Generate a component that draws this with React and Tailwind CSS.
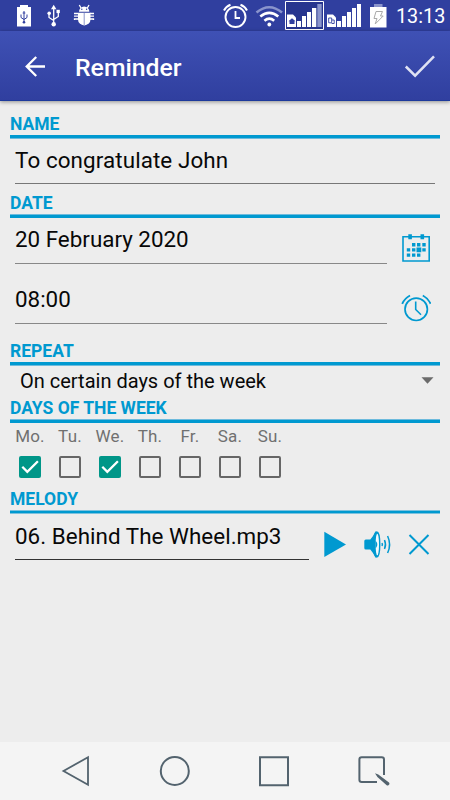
import { useState } from 'react';

const DAYS = ['Mo.', 'Tu.', 'We.', 'Th.', 'Fr.', 'Sa.', 'Su.'];

const EDGES = {
  top:    'border-t border-[#6dbbdd]',
  bottom: 'border-b border-[#6dbbdd]',
  both:   'border-y border-[#7cc2de]',
};

function StatusBar() {
  return (
    <div className="h-[31px] shrink-0 flex items-center bg-[#303f9f] text-white">
      {/* Battery with usb */}
      <svg className="ml-[16px] w-[16px] h-[24px]" viewBox="16 4 16 24">
        <path d="M20 5h8v2h3v19.500H17V7h3z" fill="#fff" />
        <path d="M24 11v12M21 14.500v3l3 2 3-2v-3M22.700 13h2.600" fill="none" stroke="#303f9f" strokeWidth="1" />
        <circle cx="24" cy="22.300" r="1.300" fill="#303f9f" />
      </svg>
      {/* Usb */}
      <svg className="ml-[14px] w-[16px] h-[24px]" viewBox="46 4 16 24">
        <path d="M53.700 8v16M49 14v3.500l4.700 3M58.300 12v4.500l-4.600 3" fill="none" stroke="#fff" strokeWidth="1.300" />
        <path d="M53.700 4.800l2.700 4.400h-5.400z" fill="#fff" />
        <circle cx="53.700" cy="24.300" r="2.200" fill="#fff" />
        <circle cx="49.200" cy="13.300" r="1.800" fill="#fff" />
        <path d="M56.500 9.800h3.300v3.300h-3.300z" fill="#fff" />
      </svg>
      {/* Debug bug */}
      <svg className="ml-[11px] w-[22px] h-[24px]" viewBox="73 4 22 24">
        <path d="M79 11.700a5.200 5.200 0 0 1 10.400 0z" fill="#fff" />
        <path d="M79.300 5l1.700 3M89 5l-1.700 3M74 13.500h4M74 16.200h4M74.500 20v-1h4M90 13.500h4M90 16.200h4M93.500 20v-1h-4" fill="none" stroke="#fff" strokeWidth="1.300" />
        <path d="M78 12.700h12.500v6.500a6.200 6.200 0 0 1-12.500 0z" fill="#fff" />
        <path d="M84.200 13v12" stroke="#8c95ca" strokeWidth="1" />
        <circle cx="81.800" cy="9.300" r=".7" fill="#303f9f" />
        <circle cx="86.600" cy="9.300" r=".7" fill="#303f9f" />
      </svg>
      <div className="grow" />
      {/* Alarm */}
      <svg className="w-[26px] h-[26px]" viewBox="223 3 26 26" fill="none" stroke="#fff">
        <circle cx="235.500" cy="17" r="10" strokeWidth="1.900" />
        <path d="M235.500 11v7h4.500" strokeWidth="1.800" />
        <path d="M224 10.500q2-4 6.500-5.700M247 10.500q-2-4-6.500-5.700" strokeWidth="2" />
      </svg>
      {/* Wifi */}
      <svg className="ml-[6px] w-[28px] h-[24px]" viewBox="255 5 28 24" fill="none" stroke="#fff" strokeWidth="2.600">
        <path d="M256.500 13.500q12.700-10.500 25.500 0" stroke="#8a94cc" />
        <path d="M260.300 17.600q9-7.600 18 0M264.400 21.700q4.900-4.200 9.800 0" />
        <circle cx="269.300" cy="25.500" r="1.900" fill="#fff" stroke="none" />
      </svg>
      {/* Sim 1, selected */}
      <svg className="ml-[2px] w-[39px] h-[31px]" viewBox="285 0 39 31">
        <path d="M285.500 1.500h38v28h-38z" fill="#27358f" stroke="#fff" />
        <path d="M287 14.500h6l3 3v9.500h-9z" fill="#fff" />
        <path d="M288.500 21.200l3.500-3 3.500 3h-1v2.800h-5v-2.800z" fill="#303f9f" />
        <path d="M297 21h4v6h-4zM302 16h4v11h-4zM307 12h4v15h-4zM312 8h4.300v19H312z" fill="#fff" />
        <path d="M317.300 4h4.400v23h-4.400z" fill="#8a94cc" />
      </svg>
      {/* Sim 2 */}
      <svg className="ml-[3px] w-[36px] h-[31px]" viewBox="327 0 36 31">
        <path d="M327 14.500h6l3 3v9.500h-9z" fill="#fff" />
        <path d="M328.700 18h3v4.800h-3zM331.700 20h2.500v3.500h-2.500" fill="none" stroke="#303f9f" strokeWidth=".9" />
        <path d="M337 21h4v6h-4zM342 16h4v11h-4zM347 12h4v15h-4zM352 8h4v19h-4zM357 4h4v23h-4z" fill="#fff" />
      </svg>
      {/* Charging battery */}
      <svg className="ml-[6px] w-[19px] h-[27px]" viewBox="369 2 19 27">
        <path d="M374 4h8.500v3H374z" fill="#8a94cc" />
        <path d="M370 7h16.500v20.500H370z" fill="#fff" />
        <path d="M376 11.500h6.500l-2 4.500h2.700l-8 8 1.800-5.500h-3z" fill="none" stroke="#aaa" />
      </svg>
      <span className="ml-[8px] mt-[2px] w-[54px] text-[19.8px] leading-[29px]">13:13</span>
    </div>
  );
}

function Toolbar() {
  return (
    <header className="relative h-[70px] shrink-0 flex items-center pb-[1px] border-b border-[#1d3a9c] bg-linear-to-b from-[#3f51b5] to-[#303f9f] shadow-[0_1px_4px_rgba(0,0,0,0.4)]">
      <svg className="ml-[24px] mt-[2px] w-[22px] h-[22px]" viewBox="24 55 22 22" fill="none" stroke="#fff" strokeWidth="2.300">
        <path d="M45 66.500H27M36.200 57l-9.500 9.500 9.500 9.500" />
      </svg>
      <h1 className="ml-[29px] mt-[5px] grow text-[24.8px] leading-[30px] font-medium text-white">Reminder</h1>
      <svg className="mr-[14px] mt-[2px] w-[32px] h-[24px]" viewBox="404 54 32 24" fill="none" stroke="#dfe2f3" strokeWidth="2.500">
        <path d="M405.800 66.500l9.300 9.200L434 56.300" />
      </svg>
    </header>
  );
}

function Heading({ children, edge }) {
  return (
    <div>
      <h2 className="h-[22px] text-[17.5px] leading-[23px] font-bold text-[#0099d0]">{children}</h2>
      <div className={`h-[4px] bg-[#0099d0] ${EDGES[edge]}`} />
    </div>
  );
}

function Field({ value, className }) {
  return (
    <div className={`ml-[5px] border-b text-[22.4px] leading-[28px] text-[#080808] whitespace-nowrap ${className}`}>{value}</div>
  );
}

function Checkbox({ checked, onChange }) {
  return (
    <button
      onClick={onChange}
      className={`size-[22px] rounded-[2px] ${checked ? 'bg-[#009688]' : 'border-2 border-[#666]'}`}
    >
      {checked && (
        <svg className="size-[22px]" viewBox="0 0 22 22" fill="none" stroke="#fff" strokeWidth="2.300">
          <path d="M3.300 10.800l5 5L18.900 5.300" />
        </svg>
      )}
    </button>
  );
}

function NavBar() {
  return (
    <nav className="h-[58px] shrink-0 flex items-center justify-between pl-[61px] pr-[60px] bg-[#f4f4f4]">
      <svg className="w-[30px] h-[32px]" viewBox="61 755 30 32" fill="none" stroke="#53636e" strokeWidth="1.800">
        <path d="M88 757.200v27.600L63.500 771z" />
      </svg>
      <svg className="w-[32px] h-[32px]" viewBox="0 0 32 32" fill="none" stroke="#53636e" strokeWidth="2">
        <circle cx="15.800" cy="16" r="14" />
      </svg>
      <svg className="w-[32px] h-[32px]" viewBox="258 755 32 32" fill="none" stroke="#53636e" strokeWidth="2">
        <path d="M260 757.200h28v28H260z" />
      </svg>
      <svg className="w-[32px] h-[32px]" viewBox="358 755 32 32" fill="none" stroke="#53636e" strokeWidth="2">
        <path d="M384 775v-15.500q0-2.300-2.300-2.300h-20q-2.300 0-2.300 2.300v20.300q0 2.300 2.300 2.300H377" />
        <path d="M375 773.200l3.300 1.300 10.700 8q1.200 1.800-.6 2.800-1 .6-2-.4l-9-8z" fill="#53636e" stroke="none" />
      </svg>
    </nav>
  );
}

export default function App() {
  const [days, setDays] = useState([true, false, true, false, false, false, false]);

  const toggle = (i) => setDays(d => d.map((v, j) => (j === i ? !v : v)));

  return (
    <div className="w-[450px] h-[800px] flex flex-col overflow-hidden bg-[#ededed] font-['Roboto',sans-serif]">
      <StatusBar />
      <Toolbar />

      <main className="grow px-[10px] pt-[12px]">
        <Heading edge="bottom">NAME</Heading>
        <div className="h-[53px] pt-[7px] pr-[5px]">
          <Field value="To congratulate John" className="h-[38px] border-[#777] tracking-[0.1px]" />
        </div>

        <Heading edge="top">DATE</Heading>
        <div className="h-[60px] pt-[7px] flex">
          <Field value="20 February 2020" className="w-[372px] h-[39px] border-[#888]" />
          <svg className="ml-[14px] mt-[8px] w-[30px] h-[30px]" viewBox="401 233 30 30">
            <path d="M403 236.800h26.200v24.200H403z" fill="none" stroke="#0099d0" strokeWidth="1.600" />
            <path d="M408.300 234.200h3.600v5h-3.600zM420.500 234.200h3.600v5h-3.600z" fill="#0099d0" />
            <path d="M412 243h3.400v3.400h-3.400zM417 243h3.400v3.400h-3.400zM422.300 243h3.400v3.400h-3.400zM406.800 248.200h3.400v3.400h-3.400zM412 248.200h3.400v3.400h-3.400zM416.500 247.500h4.800v4.800h-4.800zM422.300 248.200h3.400v3.400h-3.400zM406.800 253.400h3.400v3.400h-3.400zM412 253.400h3.400v3.400h-3.400zM417 253.400h3.400v3.400h-3.400z" fill="#0099d0" />
          </svg>
        </div>
        <div className="h-[62px] pt-[7px] flex">
          <Field value="08:00" className="w-[372px] h-[39px] border-[#888]" />
          <svg className="ml-[14px] mt-[8px] w-[30px] h-[30px]" viewBox="401 293 30 30" fill="none" stroke="#0099d0">
            <circle cx="416.200" cy="309.300" r="11.200" strokeWidth="1.700" />
            <path d="M415.700 301.500v8l5.300 5.300" strokeWidth="1.600" />
            <path d="M402.200 303.800q2.500-5.500 7.800-8.300M430.600 303.800q-2.500-5.500-7.800-8.300" strokeWidth="1.900" />
          </svg>
        </div>

        <Heading edge="bottom">REPEAT</Heading>
        <button className="w-full h-[31px] pl-[10px] pr-[6px] flex items-center justify-between text-[20px] leading-[31px] text-[#080808]">
          On certain days of the week
          <svg className="w-[13px] h-[7px] mb-[2px]" viewBox="0 0 13 7">
            <path d="M.500.300h12L6.500 6.800z" fill="#6b6b6b" />
          </svg>
        </button>

        <Heading edge="top">DAYS OF THE WEEK</Heading>
        <div className="h-[65px] flex">
          {DAYS.map((day, i) => (
            <div key={day} className="w-[40px] flex flex-col items-center">
              <span className="h-[33px] pt-[2px] text-[17px] leading-[22px] tracking-[0.2px] text-[#707070]">{day}</span>
              <Checkbox checked={days[i]} onChange={() => toggle(i)} />
            </div>
          ))}
        </div>

        <Heading edge="both">MELODY</Heading>
        <div className="h-[54px] pt-[8px] flex">
          <Field value="06. Behind The Wheel.mp3" className="w-[294px] h-[38px] border-[#333] tracking-[0.04px]" />
          <svg className="ml-[14px] mt-[8px] w-[24px] h-[28px]" viewBox="323 530 24 28">
            <path d="M324.300 531.700v25.300L346 544.500z" fill="#0099d0" />
          </svg>
          <svg className="ml-[16px] mt-[8px] w-[30px] h-[28px]" viewBox="363 530 30 28" fill="none" stroke="#0099d0" strokeWidth="1.500">
            <path d="M364.300 541q0-1.500 1.500-1.500h4.500q3-3.500 5.700-8.500v27q-2.700-5-5.700-8.500h-4.500q-1.500 0-1.500-1.500z" fill="#0099d0" stroke="none" />
            <ellipse cx="376.700" cy="544.500" rx="3" ry="12.500" fill="#0099d0" />
            <ellipse cx="377.300" cy="544.500" rx="1.700" ry="10.800" fill="#f4fafc" stroke="none" />
            <path d="M375.500 540.500q3.500 4 0 8z" fill="#0099d0" stroke="none" />
            <path d="M382 543q.8 1.500 0 3M384.500 540q2 4.500 0 9M387.600 536q4 8.500 0 17" />
          </svg>
          <svg className="ml-[15px] mt-[8px] w-[24px] h-[28px]" viewBox="408 530 24 28" fill="none" stroke="#0099d0" strokeWidth="2">
            <path d="M409.500 535l19 19M428.500 535l-19 19" />
          </svg>
        </div>
      </main>

      <NavBar />
    </div>
  );
}
